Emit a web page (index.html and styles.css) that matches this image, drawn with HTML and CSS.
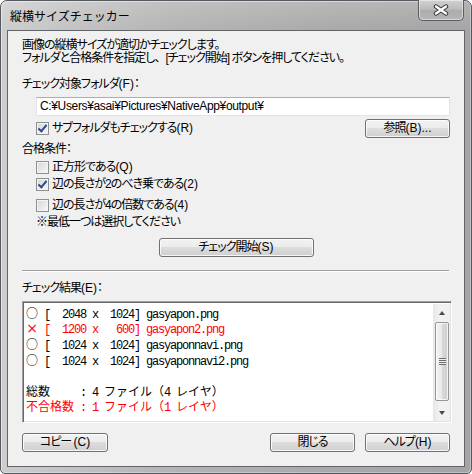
FILE: index.html
```html
<!DOCTYPE html>
<html lang="ja">
<head>
<meta charset="utf-8">
<title>縦横サイズチェッカー</title>
<link rel="stylesheet" href="styles.css">
</head>
<body>
<div class="window">
  <div class="titlebar">
    <span class="title">縦横サイズチェッカー</span>
    <div class="close">
      <svg width="16" height="12" viewBox="0 0 16 12">
        <path d="M3 2.5 L13 9.5 M13 2.5 L3 9.5" stroke="#3a3a3a" stroke-width="4.4" stroke-linecap="round"/>
        <path d="M3 2.5 L13 9.5 M13 2.5 L3 9.5" stroke="#ffffff" stroke-width="2.4" stroke-linecap="round"/>
      </svg>
    </div>
  </div>
  <div class="client">
    <p class="intro">画像の縦横サイズが適切かチェックします。<br>フォルダと合格条件を指定し<span class="punct">、</span>[チェック開始] ボタンを押してください。</p>
    <div class="label folder-label">チェック対象フォルダ<span class="asc">(F)</span>：</div>
    <div class="textbox">C:¥Users¥asai¥Pictures¥NativeApp¥output¥</div>
    <div class="sub-row">
      <div class="check checked"><span class="box"></span><span class="cap">サブフォルダもチェックする<span class="asc">(R)</span></span></div>
      <div class="btn browse">参照<span class="asc">(B)...</span></div>
    </div>
    <div class="label cond-label">合格条件：</div>
    <div class="check cb1"><span class="box"></span><span class="cap">正方形である<span class="asc">(Q)</span></span></div>
    <div class="check checked cb2"><span class="box"></span><span class="cap">辺の長さが2のべき乗である<span class="asc">(2)</span></span></div>
    <div class="check cb3"><span class="box"></span><span class="cap">辺の長さが4の倍数である<span class="asc">(4)</span></span></div>
    <div class="label note">※最低一つは選択してください</div>
    <div class="btn start">チェック開始<span class="asc">(S)</span></div>
    <div class="separator"></div>
    <div class="label result-label">チェック結果<span class="asc">(E)</span>：</div>
    <div class="list">
      <div class="list-body">
        <div class="item"><span class="mark">○</span> [  2048 x  1024] gasyapon.png</div>
        <div class="item ng"><span class="mark cross">×</span> [  1200 x   600] gasyapon2.png</div>
        <div class="item"><span class="mark">○</span> [  1024 x  1024] gasyaponnavi.png</div>
        <div class="item"><span class="mark">○</span> [  1024 x  1024] gasyaponnavi2.png</div>
        <div class="item"> </div>
        <div class="item"><span class="fw">総数</span>     : 4 <span class="fw">ファイル（</span>4 <span class="fw">レイヤ）</span></div>
        <div class="item ng"><span class="fw">不合格数</span> : 1 <span class="fw">ファイル（</span>1 <span class="fw">レイヤ）</span></div>
      </div>
      <div class="scrollbar">
        <div class="arrow up"></div>
        <div class="track">
          <div class="thumb"><span class="grip"></span></div>
        </div>
        <div class="arrow down"></div>
      </div>
    </div>
    <div class="footer">
      <div class="btn copy">コピー <span class="asc">(C)</span></div>
      <div class="spacer"></div>
      <div class="btn close-btn">閉じる</div>
      <div class="btn help">ヘルプ<span class="asc">(H)</span></div>
    </div>
  </div>
</div>
</body>
</html>
```

FILE: styles.css
```css
* { box-sizing: border-box; }
html, body { margin: 0; padding: 0; }
body {
  width: 472px;
  height: 474px;
  background: #ffffff;
  font-family: "Liberation Sans", "Noto Sans CJK JP", sans-serif;
  font-size: 12px;
  color: #000;
  font-feature-settings: "palt";
}
.window {
  width: 472px;
  height: 474px;
  border: 1px solid #555a60;
  border-radius: 7px 7px 5px 5px;
  padding: 0 6px 6px 6px;
  background:
    linear-gradient(to bottom, rgba(255,255,255,0.18), rgba(255,255,255,0) 30px),
    linear-gradient(to right, #cdcdcd 0%, #b4b4b4 35%, #a9a9a9 70%, #a4a4a4 100%);
  box-shadow: inset 1px 1px 0 rgba(255,255,255,0.45), inset -1px -1px 0 rgba(255,255,255,0.3);
  display: flex;
  flex-direction: column;
}
.titlebar {
  height: 29px;
  display: flex;
  justify-content: space-between;
  align-items: flex-start;
}
.title {
  margin-top: 7px;
  margin-left: 3px;
  line-height: 15px;
  font-family: "Noto Sans CJK JP", sans-serif;
  font-feature-settings: normal;
  font-size: 12px;
  color: #000;
}
.close {
  margin-top: -1px;
  margin-right: 1px;
  width: 46px;
  height: 21px;
  border: 1px solid #5a5e63;
  border-top: none;
  border-radius: 0 0 5px 5px;
  background: linear-gradient(to bottom, #d2d2d2, #b9b9b9 50%, #acacac 51%, #b6b6b6);
  box-shadow: inset 0 0 0 1px rgba(255,255,255,0.45);
  display: flex;
  align-items: center;
  justify-content: center;
}
.close svg { display: block; margin-top: -1px; }
.client {
  flex: 1;
  background: #f0f0f0;
  border: 1px solid #62666b;
  padding: 8px 0 0 14px;
  display: flex;
  flex-direction: column;
  align-items: flex-start;
  letter-spacing: -1px;
}
.asc { letter-spacing: 0; }
.intro {
  margin: 0;
  line-height: 13px;
  white-space: nowrap;
}
.punct { font-feature-settings: normal; }
.label {
  line-height: 13px;
  height: 13px;
  white-space: nowrap;
}
.folder-label { margin-top: 13px; }
.textbox {
  margin-top: 6px;
  margin-left: 14px;
  width: 414px;
  height: 19px;
  background: #fff;
  border: 1px solid #e2e3ea;
  border-top-color: #abadb3;
  padding-left: 3px;
  line-height: 17px;
  white-space: nowrap;
  letter-spacing: -0.35px;
}
.sub-row {
  margin-top: 3px;
  margin-left: 14px;
  width: 414px;
  height: 19px;
  display: flex;
  justify-content: space-between;
  align-items: center;
}
.check {
  display: flex;
  align-items: center;
  height: 13px;
  line-height: 13px;
  white-space: nowrap;
}
.check .box {
  width: 13px;
  height: 13px;
  flex: none;
  border: 1px solid #8e8f8f;
  background: linear-gradient(135deg, #d8d8d8 0%, #e6e6e6 50%, #fbfbfb 100%);
  box-shadow: inset 0 0 0 1px #f4f4f4;
  margin-right: 3px;
  position: relative;
}
.check.checked .box::after {
  content: "";
  position: absolute;
  left: 3px;
  top: 0px;
  width: 3px;
  height: 7px;
  border: solid #2b4a8f;
  border-width: 0 2px 2px 0;
  transform: rotate(40deg);
}
.cond-label { margin-top: 5px; }
.cb1 { margin-top: 5px; margin-left: 14px; }
.cb2 { margin-top: 4px; margin-left: 14px; }
.cb3 { margin-top: 8px; margin-left: 14px; }
.note { margin-top: 4px; margin-left: 14px; }
.btn {
  height: 19px;
  border: 1px solid #707070;
  border-radius: 3px;
  background: linear-gradient(to bottom, #f2f2f2 0%, #ebebeb 49%, #dddddd 50%, #cfcfcf 100%);
  box-shadow: inset 0 0 0 1px rgba(255,255,255,0.8);
  text-align: center;
  line-height: 17px;
  white-space: nowrap;
}
.browse { width: 85px; }
.start {
  margin-top: 9px;
  align-self: center;
  margin-left: -14px;
  width: 155px;
}
.separator {
  margin-top: 13px;
  width: 427px;
  height: 2px;
  border-top: 1px solid #a0a0a0;
  border-bottom: 1px solid #ffffff;
}
.result-label { margin-top: 10px; }
.list {
  margin-top: 6px;
  width: 430px;
  height: 122px;
  background: #fff;
  border: 1px solid;
  border-color: #a0a0a0 #ffffff #ffffff #a0a0a0;
  box-shadow: inset 1px 1px 0 #696969, inset -1px -1px 0 #e3e3e3;
  padding: 2px 1px 1px 2px;
  display: flex;
  letter-spacing: 0;
}
.list-body {
  flex: 1;
  padding: 1px 0 0 1px;
  font-family: "Liberation Mono", monospace;
  font-size: 12px;
  letter-spacing: -1.2px;
  font-feature-settings: normal;
}
.item {
  height: 15.5px;
  line-height: 15.5px;
  white-space: pre;
}
.item.ng { color: #ff0000; }
.mark {
  display: inline-block;
  width: 12px;
  text-align: center;
  font-family: "Noto Sans CJK JP", sans-serif;
  font-size: 12px;
  letter-spacing: 0;
  line-height: 15px;
}
.mark.cross { font-family: "DejaVu Sans", sans-serif; font-size: 14px; }
.fw {
  font-family: "Noto Sans CJK JP", sans-serif;
  font-size: 12px;
  letter-spacing: 0;
}
.scrollbar {
  width: 17px;
  display: flex;
  flex-direction: column;
  background: linear-gradient(to right, #e7e7e7, #f2f2f2 40%, #f0f0f0);
}
.arrow {
  height: 17px;
  display: flex;
  align-items: center;
  justify-content: center;
}
.arrow::before {
  content: "";
  width: 0;
  height: 0;
  border-left: 3.5px solid transparent;
  border-right: 3.5px solid transparent;
}
.arrow.up::before { border-bottom: 4px solid #4a4a4a; }
.arrow.down::before { border-top: 4px solid #4a4a4a; }
.track {
  flex: 1;
  display: flex;
  flex-direction: column;
  padding: 1px 1px 0 2px;
}
.thumb {
  height: 79px;
  border: 1px solid #959595;
  border-radius: 2px;
  background: linear-gradient(to right, #f3f3f3, #e8e8e8 50%, #d8d8d8 51%, #cfcfcf);
  box-shadow: inset 0 0 0 1px rgba(255,255,255,0.75);
  display: flex;
  align-items: center;
  justify-content: center;
}
.grip {
  width: 7px;
  height: 7px;
  background: repeating-linear-gradient(to bottom, #6b6b6b 0, #6b6b6b 1px, #f0f0f0 1px, #f0f0f0 2px);
}
.footer {
  margin-top: 10px;
  width: 428px;
  display: flex;
}
.spacer { flex: 1; }
.copy { width: 86px; }
.close-btn { width: 85px; margin-right: 10px; }
.help { width: 85px; }
```
